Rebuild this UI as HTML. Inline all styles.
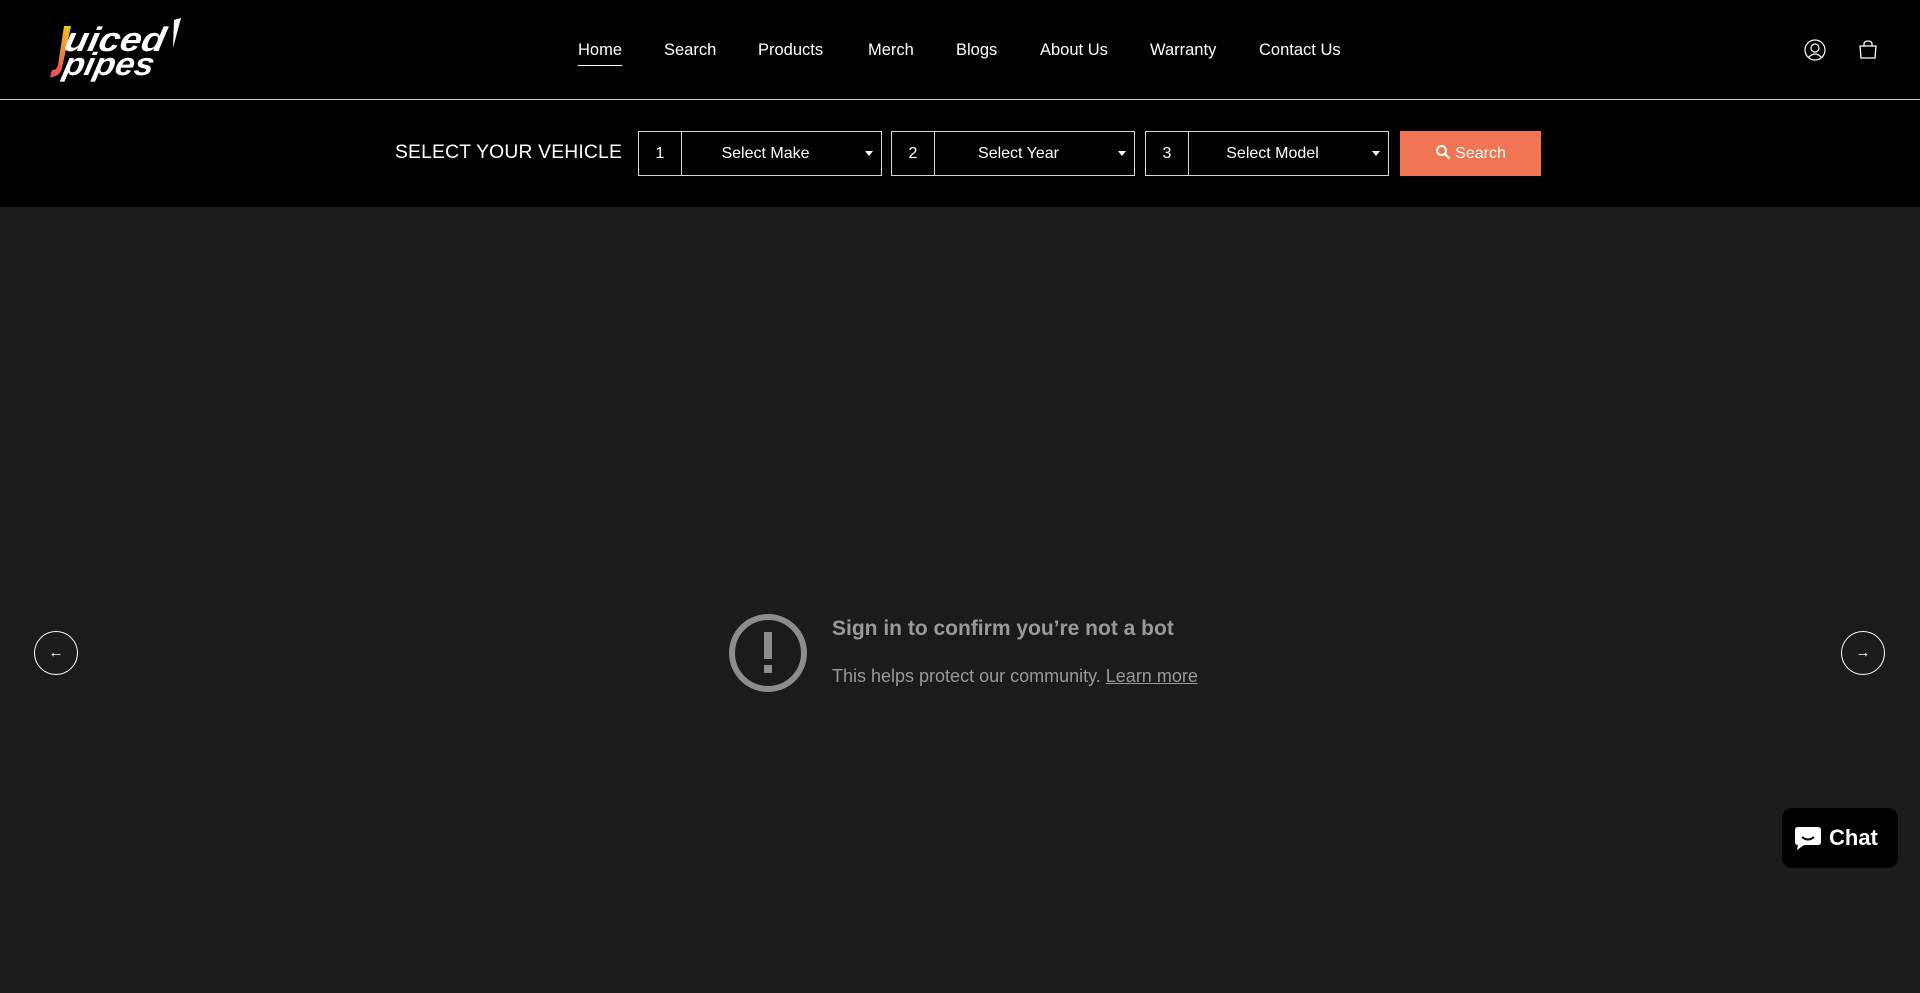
<!DOCTYPE html>
<html><head><meta charset="utf-8"><style>
*{margin:0;padding:0;box-sizing:border-box}
body{width:1920px;height:993px;background:#1b1b1b;font-family:"Liberation Sans",sans-serif;overflow:hidden;position:relative;color:#fff}
.hdr{position:absolute;left:0;top:0;width:1920px;height:100px;background:#000;border-bottom:1px solid #cfcfcf}
.nav a{position:absolute;top:41px;font-size:16.5px;color:#fff;text-decoration:none}
.veh{position:absolute;left:0;top:100px;width:1920px;height:107px;background:#000}
.lbl{position:absolute;left:395px;top:42px;font-size:19.3px;letter-spacing:.2px}
.box{position:absolute;top:31px;height:45px;border:1px solid #d8d8d8;width:244px}
.box .n{position:absolute;left:0;top:0;width:43px;height:43px;border-right:1px solid #d8d8d8;text-align:center;line-height:43px;font-size:16px}
.box .t{position:absolute;left:43px;right:32px;top:0;line-height:43px;text-align:center;font-size:16px}
.box .c{position:absolute;right:8px;top:19px;border-left:4px solid transparent;border-right:4px solid transparent;border-top:5px solid #fff}
.btn{position:absolute;left:1400px;top:31px;width:141px;height:45px;background:#f07553;font-size:16px;line-height:45px;text-align:center}
.arr{position:absolute;top:631px;width:44px;height:44px;border:1px solid #fff;border-radius:50%;text-align:center;line-height:41px;font-size:15px}
.chat{position:absolute;left:1782px;top:808px;width:116px;height:60px;background:#000;border-radius:10px;font-weight:bold;font-size:22px;line-height:60px;padding-left:47px}
</style></head><body>
<div class="hdr">
<svg style="position:absolute;left:40px;top:18px" width="142" height="64" viewBox="0 0 142 64">
<defs><linearGradient id="g" x1="0" y1="1" x2="0" y2="0"><stop offset="0" stop-color="#e84a5f"/><stop offset="1" stop-color="#f5c518"/></linearGradient></defs>
<path d="M24 8h7l-9 42q-2 8-10 9h-2l2-7q5 0 6-5z" fill="url(#g)"/>
<text x="30" y="33" font-family="Liberation Sans" font-weight="bold" font-style="italic" font-size="34" fill="#fff" transform="skewX(-12)" textLength="100" lengthAdjust="spacingAndGlyphs">uiced</text>
<text x="34" y="57" font-family="Liberation Sans" font-weight="bold" font-style="italic" font-size="32" fill="#fff" transform="skewX(-12)" textLength="90" lengthAdjust="spacingAndGlyphs">pipes</text>
<path d="M134 2l7-2-8 30z" fill="#fff"/>
</svg>
<div class="nav">
<a style="left:578px;border-bottom:1px solid #fff;padding-bottom:5px">Home</a>
<a style="left:664px">Search</a><a style="left:758px">Products</a><a style="left:868px">Merch</a><a style="left:956px">Blogs</a><a style="left:1040px">About Us</a><a style="left:1150px">Warranty</a><a style="left:1259px">Contact Us</a>
</div>
<svg style="position:absolute;left:1804px;top:39px" width="22" height="22" viewBox="0 0 22 22" fill="none" stroke="#fff" stroke-width="1.2"><circle cx="11" cy="11" r="10"/><circle cx="11" cy="9" r="4"/><path d="M4.5 18.5q6.5-7 13 0"/></svg>
<svg style="position:absolute;left:1858px;top:40px" width="20" height="19" viewBox="0 0 20 19" fill="none" stroke="#fff" stroke-width="1.3"><path d="M6 6V4q0-3 4-3t4 3v2"/><path d="M2 6h16l-1 12H3z" stroke-linejoin="round"/></svg>
</div>
<div class="veh">
<div class="lbl">SELECT YOUR VEHICLE</div>
<div class="box" style="left:638px"><div class="n">1</div><div class="t">Select Make</div><div class="c"></div></div>
<div class="box" style="left:891px"><div class="n">2</div><div class="t">Select Year</div><div class="c"></div></div>
<div class="box" style="left:1145px"><div class="n">3</div><div class="t">Select Model</div><div class="c"></div></div>
<div class="btn"><svg width="16" height="16" viewBox="0 0 16 16" style="vertical-align:-2px;margin-right:4px" fill="none" stroke="#fff" stroke-width="2"><circle cx="6.5" cy="6.5" r="4.5"/><path d="M10 10l4.5 4.5"/></svg>Search</div>
</div>
<svg style="position:absolute;left:727px;top:612px" width="82" height="82" viewBox="0 0 82 82"><circle cx="41" cy="41" r="36" fill="none" stroke="#8d8d8d" stroke-width="6"/><rect x="37" y="20" width="8" height="27" fill="#8d8d8d"/><rect x="37" y="53" width="8" height="8" fill="#8d8d8d"/></svg>
<div style="position:absolute;left:832px;top:617px;font-size:21px;font-weight:bold;color:#9a9a9a">Sign in to confirm you’re not a bot</div>
<div style="position:absolute;left:832px;top:666px;font-size:18px;color:#9a9a9a">This helps protect our community. <u>Learn more</u></div>
<div class="arr" style="left:34px">←</div>
<div class="arr" style="left:1841px">→</div>
<div class="chat"><svg style="position:absolute;left:12px;top:17px" width="28" height="26" viewBox="0 0 28 26"><path d="M4 2h20q3 0 3 3v12q0 3-3 3H10l-7 5 1-5q-3 0-3-3V5q0-3 3-3z" fill="#fff"/><path d="M8 12q6 5 12 0" stroke="#000" stroke-width="2" fill="none"/></svg>Chat</div>
</body></html>
